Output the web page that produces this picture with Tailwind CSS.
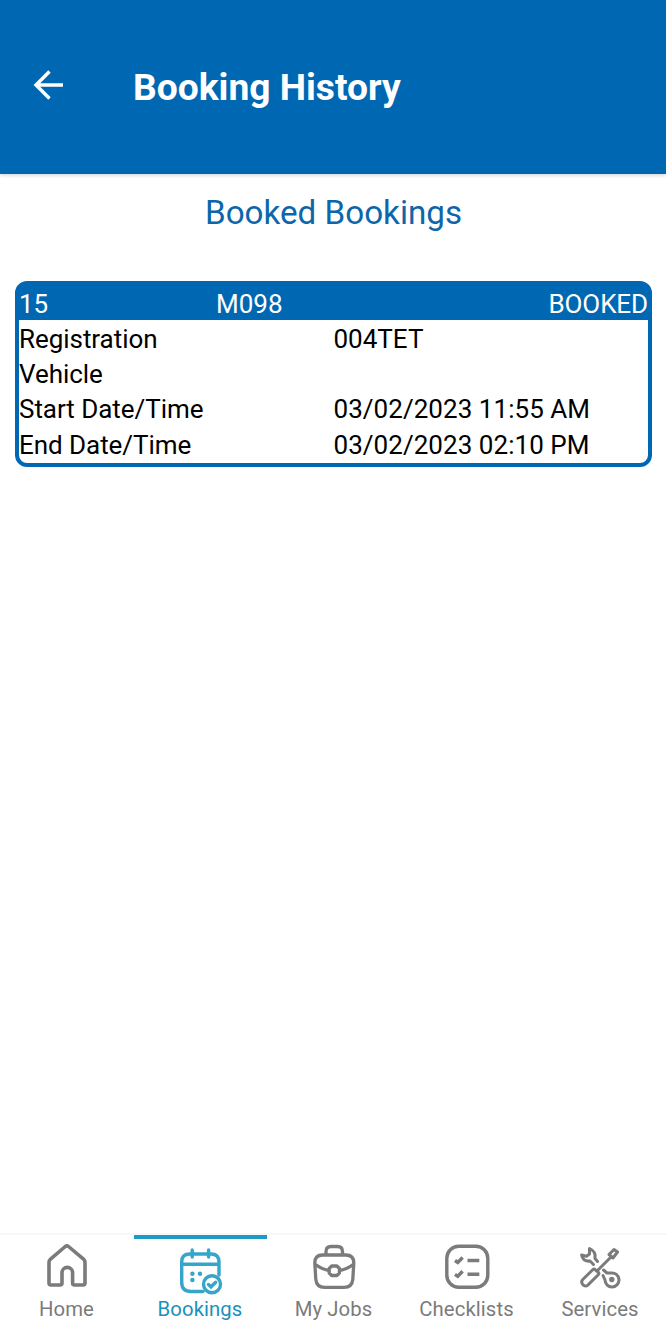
<!DOCTYPE html>
<html lang="en">
<head>
  <meta charset="UTF-8">
  <title>Booking History</title>
  <meta name="viewport" content="width=device-width, initial-scale=1.0">
  <script src="https://cdn.jsdelivr.net/npm/@tailwindcss/browser@4"></script>
</head>
<body class="bg-white h-screen flex flex-col overflow-hidden font-[Roboto,sans-serif] text-black">
  <header class="h-[174px] shrink-0 bg-[#0068b3] text-white flex items-center shadow-[0_1px_4px_rgba(0,0,0,0.2)]">
    <a href="#" aria-label="Back" class="ml-[28px] mb-[4px] w-[105px]">
      <svg class="size-[40px]" viewBox="0 0 40 40" fill="none" stroke="currentColor" stroke-width="3.4">
        <path d="M35 20H7.500M21.500 6.500L8 20l13.500 13.500"/>
      </svg>
    </a>
    <h1 class="text-[37.2px] leading-[44px] font-bold">Booking History</h1>
  </header>
  <main class="grow pl-[15px] pr-[14px]">
    <h2 class="mt-[17px] text-center text-[33.2px] leading-[43px] text-[#0d66aa]">Booked Bookings</h2>
    <section class="mt-[47px] rounded-[12px] border-[4px] border-[#0068b3] text-[26px]">
      <div class="grid grid-cols-[197px_1fr_auto] pt-[4px] leading-[31px] bg-[#0068b3] text-white">
        <span>15</span>
        <span>M098</span>
        <span class="tracking-[-0.1px]">BOOKED</span>
      </div>
      <dl class="grid grid-cols-2 pt-[2px] leading-[35.2px]">
        <dt class="tracking-[-0.05px]">Registration</dt><dd>004TET</dd>
        <dt class="tracking-[-0.05px]">Vehicle</dt><dd></dd>
        <dt class="tracking-[-0.05px]">Start Date/Time</dt><dd class="tracking-[0.05px]">03/02/2023 11:55 AM</dd>
        <dt class="tracking-[-0.05px]">End Date/Time</dt><dd class="tracking-[0.05px]">03/02/2023 02:10 PM</dd>
      </dl>
    </section>
  </main>
  <nav class="h-[101px] shrink-0 grid grid-cols-[134px_repeat(4,1fr)] border-t-2 border-[#f7f7f7] text-center text-[20.3px] leading-[26px] tracking-[0.1px] text-[#7b7b7b]">
    <a href="#" class="flex flex-col items-center pt-[8px] pr-px">
      <svg class="w-[48px] h-[53px]" viewBox="0 0 48 53" fill="none" stroke="currentColor" stroke-width="3.6" stroke-linejoin="round">
        <path d="M8 42h9q2 0 2-2V29.700a5.300 5.300 0 0 1 10.600 0V40q0 2 2 2h8.400q2 0 2-2V19.500q0-2-1.500-3.300L25.500 3.500q-1.600-1.300-3.200 0L7.500 16.200Q6 17.500 6 19.500V40q0 2 2 2z"/>
      </svg>
      <span>Home</span>
    </a>
    <a href="#" class="flex flex-col items-center border-t-4 border-[#1b9bc6] pt-[4px] pr-px text-[#1b91bd]">
      <svg class="w-[48px] h-[53px]" viewBox="0 0 48 53" fill="none" stroke="#35a5ca" stroke-width="3.4" stroke-linecap="round">
        <path d="M27 48.500H15q-9.300 0-9.300-9.300V19q0-8 8-8h21.300q8 0 8 8v13M5.700 21.300H43M16.200 7v7M32.600 7v7"/>
        <g fill="#35a5ca" stroke="none">
          <circle cx="16.400" cy="30.700" r="2.200"/>
          <circle cx="24" cy="30.700" r="2.200"/>
          <circle cx="16.400" cy="37" r="2.200"/>
        </g>
        <circle cx="36" cy="41.300" r="8.500"/>
        <path d="M32.500 41.500l2.500 2.300 4.700-4.600"/>
      </svg>
      <span>Bookings</span>
    </a>
    <a href="#" class="flex flex-col items-center pt-[8px]">
      <svg class="w-[48px] h-[53px]" viewBox="0 0 48 53" fill="none" stroke="currentColor" stroke-width="3.300" stroke-linejoin="round">
        <path d="M12.500 12h23.300q8 0 8 8l-1 16.300q-.7 8-8.700 8H14.500q-8 0-8.700-8L4.800 20q0-8 7.700-8z"/>
        <path d="M16 12V8.500q0-5 5-5h6.500q5 0 5 5V12M5.500 21.500q6.500 5 14 6M43.200 21.500q-6.500 5-14 6"/>
        <path d="M21.700 23h5.200l2.500 2.500v4.500l-2.500 2.500h-5.200L19.200 30V25.500z"/>
      </svg>
      <span>My Jobs</span>
    </a>
    <a href="#" class="flex flex-col items-center pt-[8px]">
      <svg class="w-[48px] h-[53px]" viewBox="0 0 48 53" fill="none" stroke="currentColor" stroke-width="3.400">
        <rect x="3.800" y="3.200" width="41" height="41" rx="12"/>
        <path d="M12 17.500l2.800 2 4.800-5M12 31.300l2.800 2 4.800-5M24.500 17.500h11.800M24.500 31.200h11.800"/>
      </svg>
      <span>Checklists</span>
    </a>
    <a href="#" class="flex flex-col items-center pt-[8px] pl-px">
      <svg class="w-[48px] h-[53px]" viewBox="0 0 48 53" fill="none" stroke="currentColor" stroke-width="3" stroke-linejoin="round" stroke-linecap="round">
        <!-- screwdriver -->
        <path d="M16.500 27L6.500 36.800a3.800 3.800 0 0 0 5.300 5.300L22 32q1.500-1.500.5-2.500l-3.500-3q-1-1-2.500.5zM21.500 27.500L34 15M33 11.500l5-5 3.500 2.500-4.500 6z"/>
        <!-- wrench -->
        <path d="M21.500 18.500l-2.500-3q1.300-7-5.500-10v5.500l-3 2.300-4.900-1.300q1.500 7 8.400 6l3.500 3.500"/>
        <!-- ring -->
        <path d="M27.500 27l3.500 3h4a7 7 0 1 1-6 7l-2-4.500"/>
        <circle cx="35.800" cy="36.500" r="1.200" fill="currentColor"/>
      </svg>
      <span>Services</span>
    </a>
  </nav>
</body>
</html>
